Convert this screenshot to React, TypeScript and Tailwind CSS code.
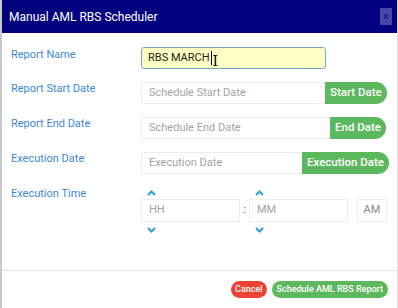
import React from "react";

const Up = () => (
  <svg width="9" height="6" viewBox="0 0 9 6" className="text-[#2a9fd8]">
    <path d="M1 5 L4.5 1.5 L8 5" fill="none" stroke="currentColor" strokeWidth="2" />
  </svg>
);

const Down = () => (
  <svg width="9" height="6" viewBox="0 0 9 6" className="text-[#2a9fd8]">
    <path d="M1 1 L4.5 4.5 L8 1" fill="none" stroke="currentColor" strokeWidth="2" />
  </svg>
);

const DateRow = ({ label, placeholder, button, inputW }: { label: string; placeholder: string; button: string; inputW: string }) => (
  <div className="flex items-start h-[35px]">
    <label className="w-[130px] shrink-0 -mt-[1px] text-[11px] text-[#3b8ad6]">{label}</label>
    <div className="flex items-center h-[22px] shrink-0">
      <div className={`${inputW} shrink-0 h-[22px] border border-[#ececec] rounded-l-[2px] flex items-center pl-[7px] text-[11px] text-[#a3a3a3]`}>
        {placeholder}
      </div>
      <button className="h-[22px] px-[5px] bg-[#5cb85c] text-white text-[11.5px] font-medium rounded-r-full -ml-px whitespace-nowrap">
        {button}
      </button>
    </div>
  </div>
);

export default function App() {
  return (
    <div className="w-[398px] h-[308px] bg-white flex flex-col font-['Roboto',sans-serif] border-l-2 border-[#c9c9c9] border-r border-r-[#e0e0e0] overflow-hidden">
      <div className="h-[33px] bg-[#02027f] flex items-center justify-between pl-[9px] pr-[5px] -ml-[2px] shrink-0">
        <span className="text-white text-[12px]">Manual AML RBS Scheduler</span>
        <span className="w-[12px] h-[17px] bg-[#4646a6] flex items-center justify-center text-[#1c1c8c] text-[11px] font-bold leading-none">×</span>
      </div>
      <div className="flex-1 pl-[9px] pr-[9px] pt-[14px]">
        <div className="flex items-start h-[35px]">
          <label className="w-[130px] shrink-0 text-[11px] text-[#3b8ad6]">Report Name</label>
          <div className="w-[185px] h-[22px] border border-[#7aa6c9] rounded-[3px] bg-[#ffffc4] flex items-center pl-[6px] text-[11px] text-[#222]">
            RBS MARCH<span className="inline-block w-px h-[14px] bg-black ml-px"></span>
            <span className="ml-[1px] mt-[6px] text-[14px] leading-none text-black font-['DejaVu_Serif',serif]">I</span>
          </div>
        </div>
        <DateRow label="Report Start Date" placeholder="Schedule Start Date" button="Start Date" inputW="w-[185px]" />
        <DateRow label="Report End Date" placeholder="Schedule End Date" button="End Date" inputW="w-[190px]" />
        <DateRow label="Execution Date" placeholder="Execution Date" button="Execution Date" inputW="w-[162px]" />
        <div className="flex items-start">
          <label className="w-[130px] shrink-0 -mt-[1px] text-[11px] text-[#3b8ad6]">Execution Time</label>
          <div className="flex items-center -mt-[2px]">
            <div className="flex flex-col items-start">
              <div className="h-[14px] pl-[6px] flex items-end pb-[3px]"><Up /></div>
              <div className="w-[99px] h-[23px] border border-[#ececec] flex items-center pl-[7px] text-[11px] text-[#a3a3a3]">HH</div>
              <div className="h-[14px] pl-[6px] flex items-start pt-[5px]"><Down /></div>
            </div>
            <span className="w-[9px] text-center text-[11px] text-[#555]">:</span>
            <div className="flex flex-col items-start">
              <div className="h-[14px] pl-[6px] flex items-end pb-[3px]"><Up /></div>
              <div className="w-[99px] h-[23px] border border-[#ececec] flex items-center pl-[7px] text-[11px] text-[#a3a3a3]">MM</div>
              <div className="h-[14px] pl-[6px] flex items-start pt-[5px]"><Down /></div>
            </div>
            <div className="ml-[9px] w-[30px] h-[23px] border border-[#ececec] flex items-center justify-center text-[11px] text-[#8a8a8a]">AM</div>
          </div>
        </div>
      </div>
      <div className="h-[38px] border-t border-[#e3e3e3] flex items-center justify-end gap-[5px] pr-[9px] shrink-0 -mt-px">
        <button className="h-[17px] px-[4px] rounded-full bg-[#ea4335] text-white text-[9px] font-medium">Cancel</button>
        <button className="h-[17px] px-[5px] rounded-full bg-[#5cb85c] text-white text-[9px] font-medium">Schedule AML RBS Report</button>
      </div>
    </div>
  );
}
